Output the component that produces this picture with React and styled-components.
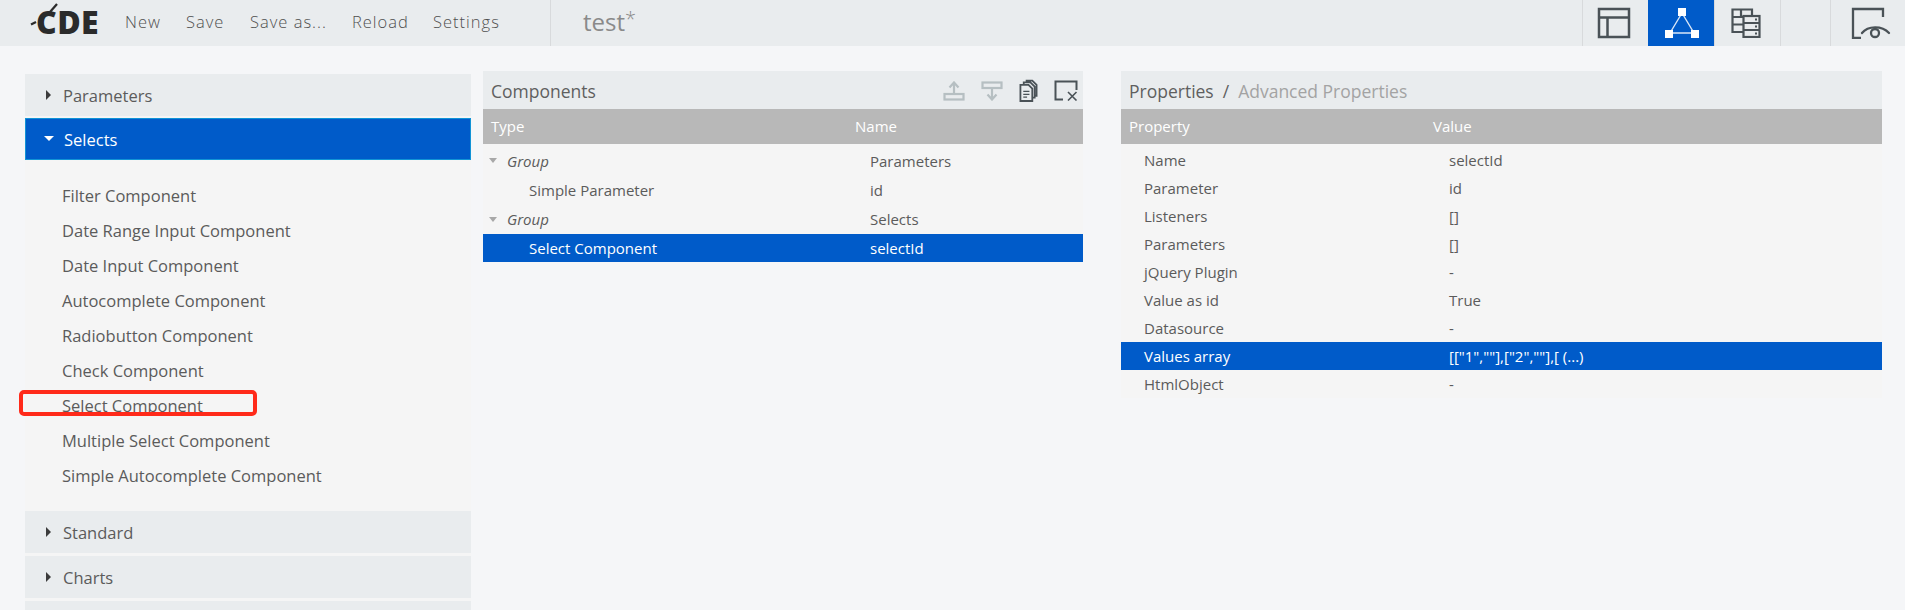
import React from "react";
import styled, { createGlobalStyle } from "styled-components";

const colors = {
  page: "#f5f6f8",
  bar: "#e9ecee",
  panel: "#f5f5f5",
  blue: "#005bc9",
  gray: "#b8b8b8",
  text: "#5b5b5b",
  icon: "#4a5257",
  faded: "#b6bfc2",
};

const GlobalStyle = createGlobalStyle`
  html, body {
    margin: 0;
    height: 610px;
    overflow: hidden;
    background: ${colors.page};
    font-family: "Open Sans", "Liberation Sans", sans-serif;
    color: ${colors.text};
  }
`;

const Header = styled.header`
  display: flex;
  align-items: stretch;
  height: 46px;
  background: ${colors.bar};
`;

const Logo = styled.div`
  position: relative;
  width: 125px;
  padding: 4px 0 0 36px;
  box-sizing: border-box;
  font-size: 32px;
  line-height: 36px;
  font-weight: 800;
  letter-spacing: 0.4px;
  color: #2b2b2b;

  svg {
    position: absolute;
    left: 30px;
    top: 3px;
  }
`;

const Nav = styled.nav`
  display: flex;
  width: 425px;
  align-items: center;
  padding-bottom: 4px;
  box-sizing: border-box;
`;

const NavItem = styled.span`
  width: ${(p) => p.$w}px;
  font-size: 16.5px;
  font-weight: 300;
  letter-spacing: 1px;
  color: #505050;
`;

const FileName = styled.div`
  flex: 1;
  display: flex;
  align-items: center;
  padding: 0 0 4px 32px;
  border-left: 1px solid #d8dadc;
  font-size: 24px;
  color: #8a8a8a;

  sup {
    font-size: 20px;
    font-weight: 300;
    line-height: 0;
    position: relative;
    top: -2px;
  }
`;

const ViewTab = styled.div`
  display: flex;
  align-items: center;
  justify-content: ${(p) => (p.$start ? "flex-start" : "center")};
  box-sizing: border-box;
  width: ${(p) => p.$w || 66}px;
  padding-left: ${(p) => (p.$start ? 20 : 0)}px;
  padding-right: ${(p) => (p.$nudge ? 4 : 0)}px;
  border-left: 1px solid ${(p) => (p.$active ? colors.blue : "#d8dadc")};
  background: ${(p) => (p.$active ? colors.blue : "transparent")};
`;

const Main = styled.main`
  display: flex;
  align-items: flex-start;
  box-sizing: border-box;
  height: 564px;
  overflow: hidden;
  padding: 25px 23px 0 25px;
`;

const Sidebar = styled.aside`
  width: 446px;
  height: 536px;
  margin-top: 3px;
  margin-right: 12px;
  background: ${colors.panel};
`;

const Section = styled.div`
  display: flex;
  align-items: center;
  box-sizing: border-box;
  height: ${(p) => p.$h || 42}px;
  margin-bottom: ${(p) => p.$gap}px;
  padding-left: 18px;
  font-size: 16.5px;
  background: ${(p) => (p.$open ? colors.blue : colors.bar)};
  color: ${(p) => (p.$open ? "#fff" : colors.text)};
  border: ${(p) => (p.$open ? "1px solid #1193d6" : "none")};
`;

const Arrow = styled.span`
  width: 0;
  height: 0;
  margin-right: 10px;
  margin-bottom: 1px;
  border-style: solid;
  ${(p) =>
    p.$open
      ? `border-width: 5px 5px 0 5px;
         border-color: #fff transparent transparent transparent;`
      : `border-width: 5px 0 5px 5px;
         margin-left: 3px;
         margin-right: 12px;
         border-color: transparent transparent transparent #3c3c3c;`}
`;

const ItemList = styled.ul`
  list-style: none;
  margin: 0;
  padding: 18px 0 18px 37px;
`;

const Item = styled.li`
  position: relative;
  height: 35px;
  line-height: 35px;
  font-size: 16.5px;
`;

const Highlight = styled.span`
  position: absolute;
  left: -43px;
  top: 2px;
  width: 238px;
  height: 26px;
  box-sizing: border-box;
  border: 4px solid #ff2a1a;
  border-radius: 5px;
`;

const Panel = styled.section`
  width: ${(p) => p.$w}px;
  height: ${(p) => p.$h}px;
  margin-right: ${(p) => p.$gap || 0}px;
  background: ${colors.panel};
`;

const PanelTitle = styled.div`
  display: flex;
  align-items: center;
  justify-content: space-between;
  box-sizing: border-box;
  height: 38px;
  padding-left: ${(p) => p.$pad}px;
  padding-top: 1px;
  background: ${colors.bar};
  font-size: 17.5px;
  color: #5f5f5f;
`;

const Faded = styled.span`
  color: #a3a3a3;
`;

const Slash = styled.span`
  margin: 0 9px;
`;

const Tools = styled.div`
  display: flex;
  align-items: center;
  gap: 16px;
  padding-right: 4px;
`;

const HeadRow = styled.div`
  display: grid;
  grid-template-columns: ${(p) => p.$cols};
  align-items: center;
  height: 35px;
  padding-bottom: 1px;
  box-sizing: border-box;
  background: ${colors.gray};
  color: #fff;
  font-size: 15px;
`;

const HeadCell = styled.span`
  padding-left: 8px;
`;

const Rows = styled.div`
  padding-top: ${(p) => p.$top}px;
`;

const Row = styled.div`
  display: grid;
  grid-template-columns: ${(p) => p.$cols};
  align-items: center;
  height: ${(p) => p.$h}px;
  font-size: 15px;
  background: ${(p) => (p.$selected ? colors.blue : "transparent")};
  color: ${(p) => (p.$selected ? "#fff" : colors.text)};
`;

const TypeCell = styled.span`
  display: flex;
  align-items: center;
  padding-left: ${(p) => p.$indent}px;
  font-style: ${(p) => (p.$group ? "italic" : "normal")};
`;

const Caret = styled.span`
  width: 0;
  height: 0;
  margin-right: 10px;
  border-style: solid;
  border-width: 5px 4.5px 0 4.5px;
  border-color: #a8a8a8 transparent transparent transparent;
`;

const ValueCell = styled.span`
  padding-left: ${(p) => p.$indent}px;
`;

const LayoutIcon = () => (
  <svg width="34" height="32" viewBox="0 0 34 32" fill="none" stroke={colors.icon} strokeWidth="2.5">
    <rect x="2" y="2" width="30" height="28" />
    <path d="M2 10.5H32M10.5 10.5V30" />
  </svg>
);

const ComponentsIcon = () => (
  <svg width="36" height="32" viewBox="0 0 36 32" fill="none">
    <path d="M18 6L6 26H30Z" stroke="#fff" strokeWidth="1.4" opacity="0.85" />
    <path d="M14 1h8v8h-8zM1 23h8v8H1zM27 23h8v8h-8z" fill="#fff" />
  </svg>
);

const DatasourceIcon = () => (
  <svg width="30" height="30" viewBox="0 0 30 30" fill="none" stroke={colors.icon} strokeWidth="2.2">
    <path d="M12 24H1.5V1.5H21V8" />
    <path d="M1.5 9H12M1.5 16.5H12M10 1.5V8" />
    <rect x="12.5" y="8" width="16" height="21" fill={colors.bar} />
    <path d="M12.5 15H28.5M12.5 22H28.5" />
    <path d="M24 11.5h2M24 18.5h2M24 25.5h2" />
  </svg>
);

const PreviewIcon = () => (
  <svg width="40" height="32" viewBox="0 0 40 32" fill="none" stroke={colors.icon} strokeWidth="2.3">
    <path d="M32 10V2H2V31H10" />
    <path d="M11 26C17 18.5 31 18.5 38 26" strokeLinecap="round" />
    <circle cx="24" cy="26" r="4" />
  </svg>
);

const UpIcon = () => (
  <svg width="22" height="20" viewBox="0 0 22 20" fill="none" stroke={colors.faded} strokeWidth="2.2">
    <rect x="1.5" y="13" width="19" height="5.5" />
    <path d="M11 13V2M6.5 6.5L11 1.5L15.5 6.5" />
  </svg>
);

const DownIcon = () => (
  <svg width="22" height="20" viewBox="0 0 22 20" fill="none" stroke={colors.faded} strokeWidth="2.2">
    <rect x="1.5" y="1.5" width="19" height="5.5" />
    <path d="M11 7V18M6.5 13.5L11 18.5L15.5 13.5" />
  </svg>
);

const CopyIcon = () => (
  <svg width="19" height="24" viewBox="0 0 20 24" fill="none" stroke={colors.icon} strokeWidth="1.9">
    <path d="M1.5 5.5H10L14 9.5V22.5H1.5Z" />
    <path d="M5 5V3H12L16.5 7.5V19H14M8 3V1H14L18.5 5.5V17H16.5" />
    <path d="M4.5 12.5H11M4.5 15.5H11M4.5 18.5H8.5" strokeWidth="1.3" />
  </svg>
);

const DeleteIcon = () => (
  <svg width="25" height="21" viewBox="0 0 25 21" fill="none" stroke={colors.icon} strokeWidth="2">
    <path d="M9 19.5H1.5V1.5H22.5V10" />
    <path d="M14 12L22.5 20.5M22.5 12L14 20.5" strokeWidth="1.6" />
  </svg>
);

const selectItems = [
  "Filter Component",
  "Date Range Input Component",
  "Date Input Component",
  "Autocomplete Component",
  "Radiobutton Component",
  "Check Component",
  "Select Component",
  "Multiple Select Component",
  "Simple Autocomplete Component",
];

const componentRows = [
  { type: "Group", name: "Parameters", group: true, h: 29 },
  { type: "Simple Parameter", name: "id", h: 29 },
  { type: "Group", name: "Selects", group: true, h: 30 },
  { type: "Select Component", name: "selectId", selected: true, h: 28 },
];

const propertyRows = [
  ["Name", "selectId"],
  ["Parameter", "id"],
  ["Listeners", "[]"],
  ["Parameters", "[]"],
  ["jQuery Plugin", "-"],
  ["Value as id", "True"],
  ["Datasource", "-"],
  ["Values array", '[["1",""],["2",""],[ (...)'],
  ["HtmlObject", "-"],
];

const COMP_COLS = "364px 1fr";
const PROP_COLS = "304px 1fr";

export default function App() {
  return (
    <>
      <GlobalStyle />
      <Header>
        <Logo>
          <svg width="30" height="24" viewBox="0 0 30 24" fill="none" stroke="#2b2b2b" strokeWidth="2.2">
            <path d="M1 21.5L6 19" />
            <path d="M20 9L27 1" />
          </svg>
          CDE
        </Logo>
        <Nav>
          <NavItem $w={61}>New</NavItem>
          <NavItem $w={64}>Save</NavItem>
          <NavItem $w={102}>Save as...</NavItem>
          <NavItem $w={81}>Reload</NavItem>
          <NavItem $w={117}>Settings</NavItem>
        </Nav>
        <FileName>
          test<sup>*</sup>
        </FileName>
        <ViewTab $nudge>
          <LayoutIcon />
        </ViewTab>
        <ViewTab $active>
          <ComponentsIcon />
        </ViewTab>
        <ViewTab $nudge>
          <DatasourceIcon />
        </ViewTab>
        <ViewTab $w={50} />
        <ViewTab $w={75} $start>
          <PreviewIcon />
        </ViewTab>
      </Header>
      <Main>
        <Sidebar>
          <Section $gap={2}>
            <Arrow />
            Parameters
          </Section>
          <Section $open $gap={0}>
            <Arrow $open />
            Selects
          </Section>
          <ItemList>
            {selectItems.map((item) => (
              <Item key={item}>
                {item === "Select Component" && <Highlight />}
                {item}
              </Item>
            ))}
          </ItemList>
          <Section $gap={3}>
            <Arrow />
            Standard
          </Section>
          <Section $gap={3}>
            <Arrow />
            Charts
          </Section>
          <Section $gap={0} $h={9} />
        </Sidebar>
        <Panel $w={600} $h={191} $gap={38}>
          <PanelTitle $pad={8}>
            Components
            <Tools>
              <UpIcon />
              <DownIcon />
              <CopyIcon />
              <DeleteIcon />
            </Tools>
          </PanelTitle>
          <HeadRow $cols={COMP_COLS}>
            <HeadCell>Type</HeadCell>
            <HeadCell>Name</HeadCell>
          </HeadRow>
          <Rows $top={2}>
            {componentRows.map((row) => (
              <Row key={row.name} $cols={COMP_COLS} $h={row.h} $selected={row.selected}>
                <TypeCell $indent={row.group ? 6 : 46} $group={row.group}>
                  {row.group && <Caret />}
                  {row.type}
                </TypeCell>
                <ValueCell $indent={23}>{row.name}</ValueCell>
              </Row>
            ))}
          </Rows>
        </Panel>
        <Panel $w={761} $h={327}>
          <PanelTitle $pad={8}>
            <span>
              Properties
              <Slash>/</Slash>
              <Faded>Advanced Properties</Faded>
            </span>
          </PanelTitle>
          <HeadRow $cols={PROP_COLS}>
            <HeadCell>Property</HeadCell>
            <HeadCell>Value</HeadCell>
          </HeadRow>
          <Rows $top={2}>
            {propertyRows.map(([label, value]) => (
              <Row key={label} $cols={PROP_COLS} $h={28} $selected={label === "Values array"}>
                <TypeCell $indent={23}>{label}</TypeCell>
                <ValueCell $indent={24}>{value}</ValueCell>
              </Row>
            ))}
          </Rows>
        </Panel>
      </Main>
    </>
  );
}
